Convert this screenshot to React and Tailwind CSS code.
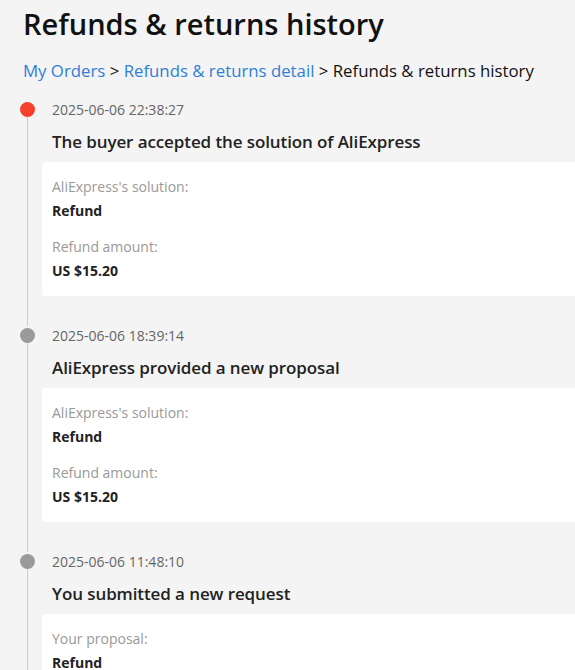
import React from 'react';

const events = [
  {
    time: '2025-06-06 22:38:27',
    title: 'The buyer accepted the solution of AliExpress',
    active: true,
    rows: [
      { label: "AliExpress's solution:", value: 'Refund' },
      { label: 'Refund amount:', value: 'US $15.20' },
    ],
  },
  {
    time: '2025-06-06 18:39:14',
    title: 'AliExpress provided a new proposal',
    rows: [
      { label: "AliExpress's solution:", value: 'Refund' },
      { label: 'Refund amount:', value: 'US $15.20' },
    ],
  },
  {
    time: '2025-06-06 11:48:10',
    title: 'You submitted a new request',
    rows: [
      { label: 'Your proposal:', value: 'Refund' },
      { label: 'Refund amount:', value: 'US $15.20' },
    ],
  },
];

function TimelineItem({ event }) {
  return (
    <div className="flex">
      {/* Dot + line */}
      <div className="flex flex-col items-center w-[15px] mr-[7px] shrink-0">
        <div
          className={`w-[15px] h-[15px] rounded-full mt-[2px] shrink-0 ${
            event.active ? 'bg-[#f5402c]' : 'bg-[#9a9a9a]'
          }`}
        />
        <div className="w-px flex-1 bg-[#cccccc]" />
      </div>

      {/* Content */}
      <div className="flex-1 pb-[30px]">
        <div className="pl-[10px] text-[14px] leading-[20px] text-[#666]">{event.time}</div>
        <div className="pl-[10px] mt-[10px] text-[17px] leading-[24px] font-semibold text-[#222] tracking-[-0.1px]">
          {event.title}
        </div>
        <div className="mt-[8px] bg-white rounded-l-[4px] px-[10px] py-[15px]">
          {event.rows.map((row, i) => (
            <div key={row.label} className={i > 0 ? 'mt-[16px]' : ''}>
              <div className="text-[14px] leading-[20px] text-[#999]">{row.label}</div>
              <div className="mt-[4px] text-[14px] leading-[20px] font-bold text-[#222]">{row.value}</div>
            </div>
          ))}
        </div>
      </div>
    </div>
  );
}

export default function App() {
  return (
    <div
      className="min-h-screen overflow-hidden bg-[#f4f4f4]"
      style={{ fontFamily: '"Open Sans", "Noto Sans", sans-serif' }}
    >
      <div className="w-[760px] pl-[23px]">
        <h1 className="pt-[6px] text-[29px] leading-[36px] font-semibold text-[#111]">
          Refunds &amp; returns history
        </h1>

        {/* Breadcrumb */}
        <div className="mt-[17px] text-[16.8px] leading-[24px] text-[#111]">
          <span className="text-[#2f7ed8]">My Orders</span>
          {' > '}
          <span className="text-[#2f7ed8]">Refunds &amp; returns detail</span>
          {' > '}
          <span>Refunds &amp; returns history</span>
        </div>

        <div className="mt-[17px] -ml-[3px]">
          {events.map(event => (
            <TimelineItem key={event.time} event={event} />
          ))}
        </div>
      </div>
    </div>
  );
}
